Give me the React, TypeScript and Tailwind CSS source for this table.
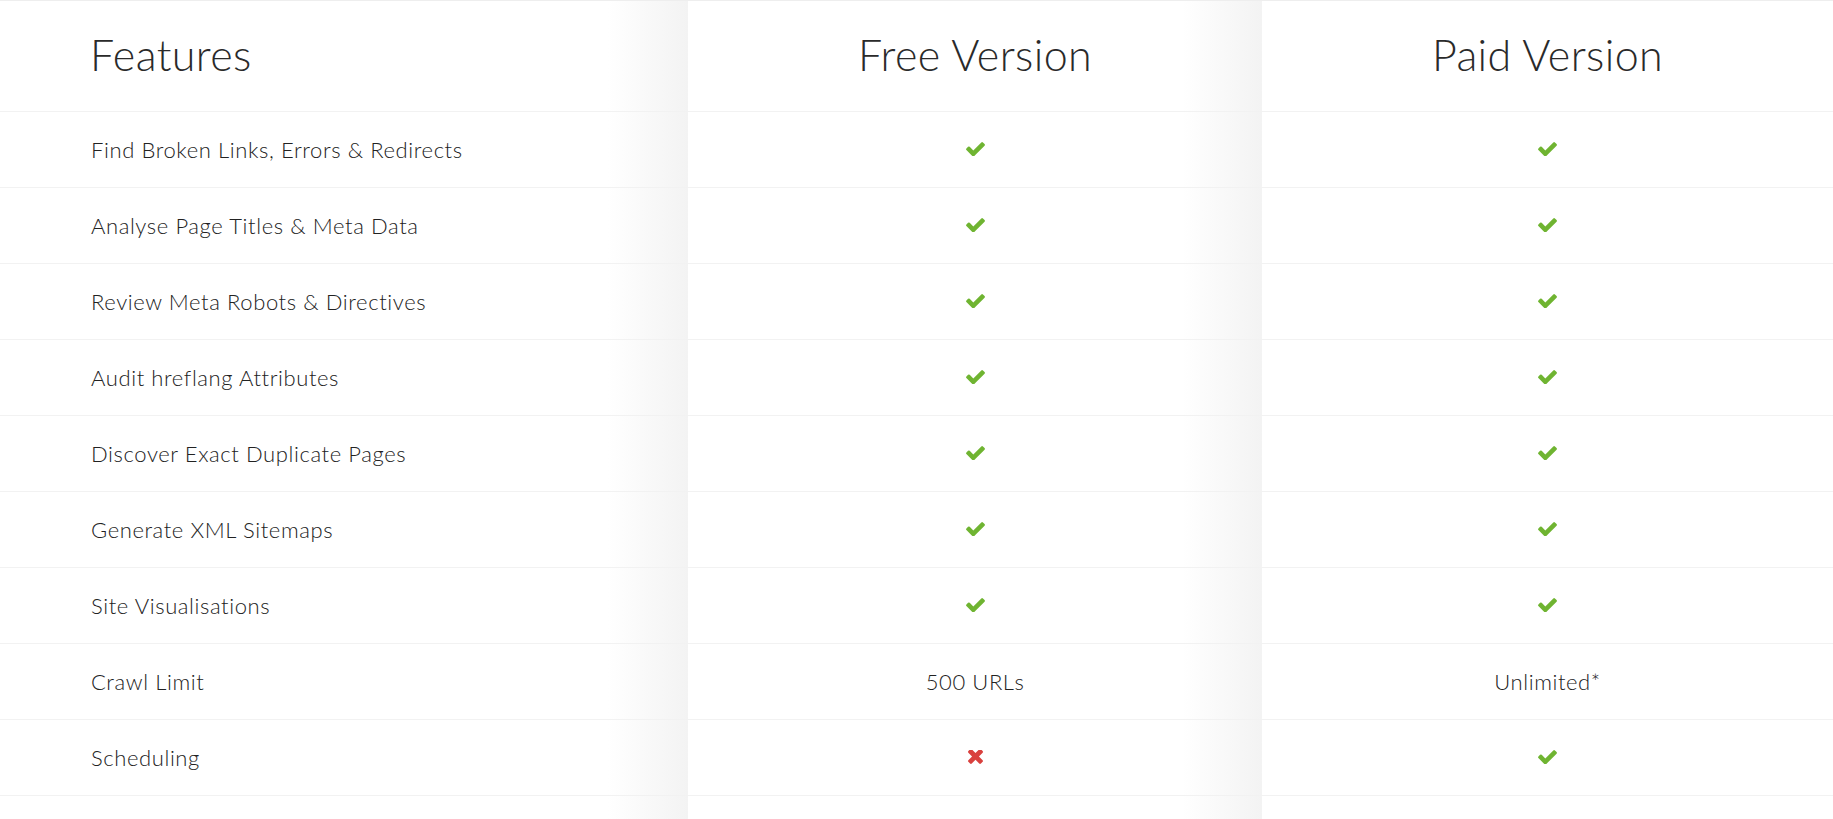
import React from "react";

const Check = () => (
  <svg width="19" height="14" viewBox="121 330 1550 1150" aria-hidden="true">
    <path
      fill="#6fb431"
      d="M1671 566q0 40-28 68l-724 724-136 136q-28 28-68 28t-68-28l-136-136-362-362q-28-28-28-68t28-68l136-136q28-28 68-28t68 28l294 295 656-657q28-28 68-28t68 28l136 136q28 28 28 68z"
    />
  </svg>
);

const Cross = () => (
  <svg width="15" height="15" viewBox="110 450 1188 1188" aria-hidden="true">
    <path
      fill="#d9413e"
      d="M1298 1322q0 40-28 68l-136 136q-28 28-68 28t-68-28l-294-294-294 294q-28 28-68 28t-68-28l-136-136q-28-28-28-68t28-68l294-294-294-294q-28-28-28-68t28-68l136-136q28-28 68-28t68 28l294 294 294-294q28-28 68-28t68 28l136 136q28 28 28 68t-28 68l-294 294 294 294q28 28 28 68z"
    />
  </svg>
);

type Val = "yes" | "no" | string;

const rows: { name: string; free: Val; paid: Val }[] = [
  { name: "Find Broken Links, Errors & Redirects", free: "yes", paid: "yes" },
  { name: "Analyse Page Titles & Meta Data", free: "yes", paid: "yes" },
  { name: "Review Meta Robots & Directives", free: "yes", paid: "yes" },
  { name: "Audit hreflang Attributes", free: "yes", paid: "yes" },
  { name: "Discover Exact Duplicate Pages", free: "yes", paid: "yes" },
  { name: "Generate XML Sitemaps", free: "yes", paid: "yes" },
  { name: "Site Visualisations", free: "yes", paid: "yes" },
  { name: "Crawl Limit", free: "500 URLs", paid: "Unlimited*" },
  { name: "Scheduling", free: "no", paid: "yes" },
];

const Cell = ({ v }: { v: Val }) => {
  if (v === "yes") return <Check />;
  if (v === "no") return <Cross />;
  return <span>{v}</span>;
};

const shadeA =
  "bg-[linear-gradient(to_right,#ffffff_0,#ffffff_calc(100%-80px),#f3f3f3_100%)]";

export default function App() {
  return (
    <div
      className="w-[1833px] h-[819px] overflow-hidden bg-white text-[#333333]"
      style={{ fontFamily: "Lato, 'Open Sans', sans-serif" }}
    >
      <div className="border-t border-[#eeeeee]">
        <div className="grid grid-cols-[688px_574px_1fr] h-[111px] border-b border-[#f2f2f2] text-[#2a2a2a]">
          <div className={`${shadeA} flex items-center pl-[90px] pb-[2px]`}>
            <h2 className="text-[43px] font-light tracking-[0.4px]">Features</h2>
          </div>
          <div className={`${shadeA} flex items-center justify-center pb-[2px]`}>
            <h2 className="text-[43px] font-light tracking-[0.4px]">Free Version</h2>
          </div>
          <div className="flex items-center justify-center pb-[2px]">
            <h2 className="text-[43px] font-light tracking-[0.4px]">Paid Version</h2>
          </div>
        </div>
        {rows.map((r) => (
          <div
            key={r.name}
            className="grid grid-cols-[688px_574px_1fr] h-[76px] border-b border-[#f2f2f2] text-[22px] font-light tracking-[0.6px] text-[#222222]"
          >
            <div className={`${shadeA} flex items-center pl-[91px] pb-[1px]`}>{r.name}</div>
            <div className={`${shadeA} flex items-center justify-center pb-[1px]`}>
              <Cell v={r.free} />
            </div>
            <div className="flex items-center justify-center pb-[1px]">
              <Cell v={r.paid} />
            </div>
          </div>
        ))}
        <div className="grid grid-cols-[688px_574px_1fr] h-[76px]">
          <div className={shadeA} />
          <div className={shadeA} />
          <div />
        </div>
      </div>
    </div>
  );
}
